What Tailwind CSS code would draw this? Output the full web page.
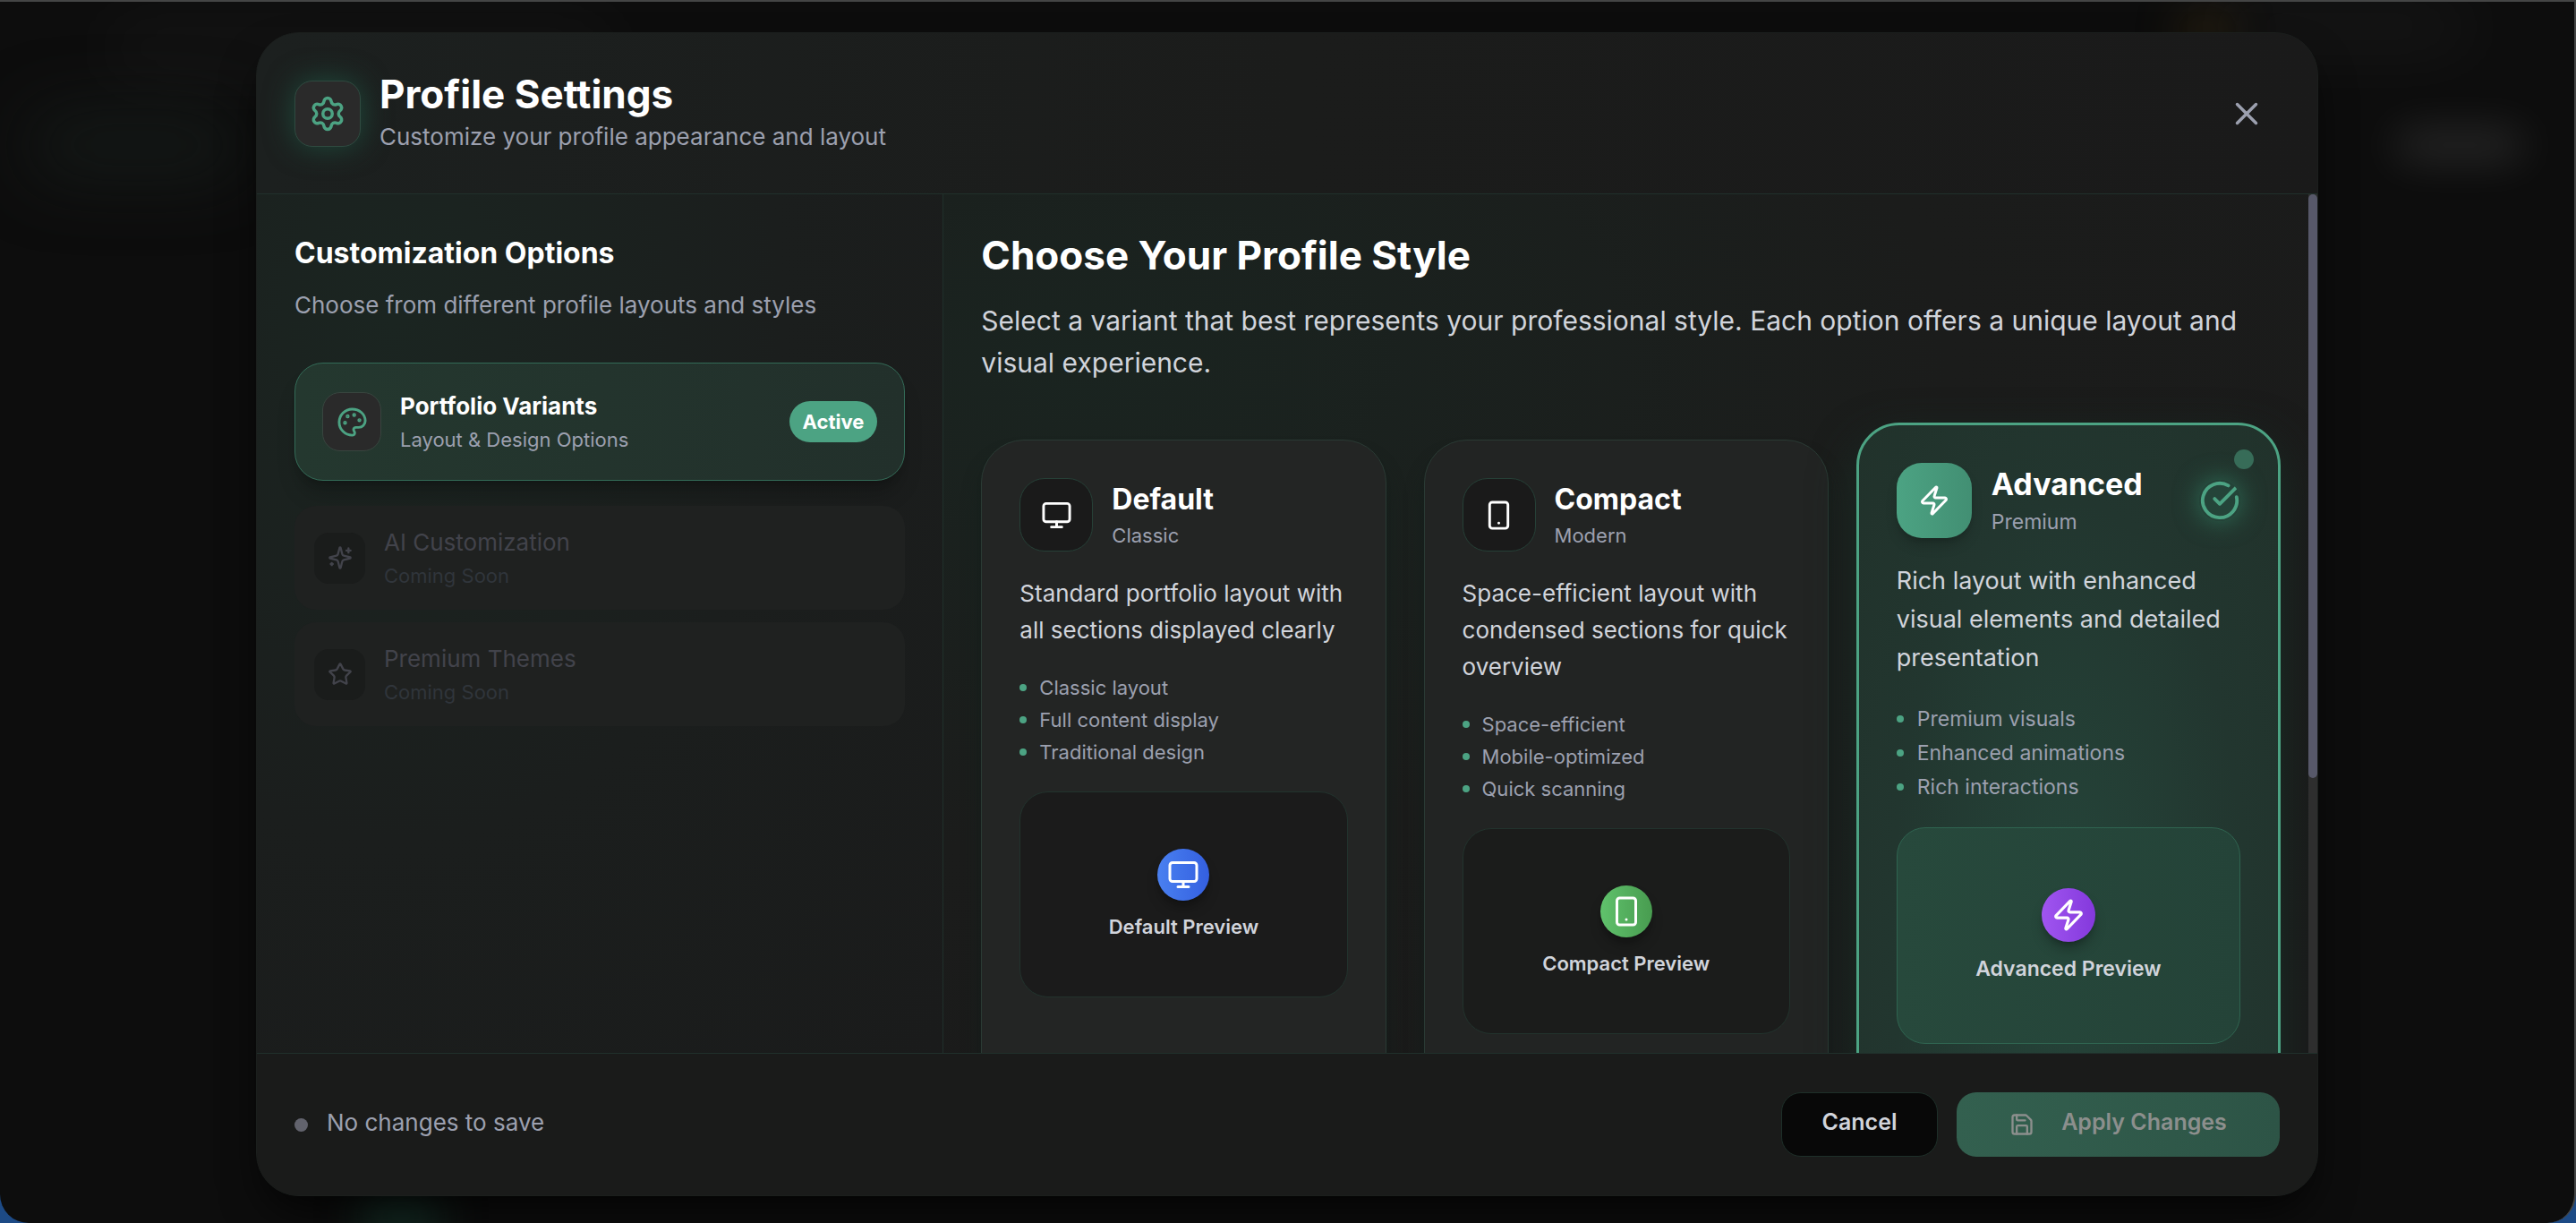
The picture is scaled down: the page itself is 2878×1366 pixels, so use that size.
<!DOCTYPE html>
<html lang="en">
<head>
<meta charset="utf-8">
<meta name="viewport" content="width=device-width, initial-scale=1">
<title>Profile Settings</title>
<script src="https://cdn.jsdelivr.net/npm/@tailwindcss/browser@4"></script>
</head>
<body class="bg-[#1d4a85] font-['Inter',sans-serif] text-white">
<svg class="hidden" aria-hidden="true">
  <defs>
    <symbol id="monitor" viewBox="0 0 24 24"><rect x="2" y="3" width="20" height="14" rx="2"/><path d="M8 21h8M12 17v4"/></symbol>
    <symbol id="phone" viewBox="0 0 24 24"><rect x="5" y="2" width="14" height="20" rx="2"/><path d="M12 18h.01"/></symbol>
    <symbol id="zap" viewBox="0 0 24 24"><path d="M4 14a1 1 0 0 1-.78-1.63l9.9-10.2a.5.5 0 0 1 .86.46l-1.92 6.02A1 1 0 0 0 13 10h7a1 1 0 0 1 .78 1.63l-9.9 10.2a.5.5 0 0 1-.86-.46l1.92-6.02A1 1 0 0 0 11 14z"/></symbol>
  </defs>
</svg>

<div class="relative flex h-screen items-center justify-center overflow-hidden rounded-b-[32px] border-t-2 border-r-2 border-[#444545] bg-[#0d0d0d] pt-1">
  <!-- blurred page behind the dialog -->
  <div class="absolute top-6 left-28 h-14 w-[580px] rounded-full bg-white/4 blur-2xl"></div>
  <div class="absolute top-32 left-8 h-16 w-60 rounded-full bg-[#1a2320]/60 blur-2xl"></div>
  <div class="absolute top-2 right-28 h-10 w-[300px] rounded-full bg-white/6 blur-2xl"></div>
  <div class="absolute top-36 right-14 h-8 w-36 rounded-full bg-white/12 blur-xl"></div>
  <div class="absolute top-5 right-[380px] h-6 w-16 rounded-full bg-[#6b4a10]/40 blur-xl"></div>
  <div class="absolute -bottom-3 left-[400px] h-10 w-24 rounded-full bg-[#1c5543]/60 blur-xl"></div>

  <div role="dialog" aria-labelledby="dialog-title" class="relative flex h-[calc(100vh-66px)] w-full max-w-[2304px] flex-col overflow-hidden rounded-[48px] border border-[#1b1f1d] bg-[#1a1a1a] shadow-2xl shadow-black/80">
    <header class="flex h-[180px] shrink-0 items-center gap-[21px] border-b border-[#20302b] bg-linear-to-r from-[#1c201f] via-[#1b1c1b] to-[#1a1a1a] px-[42px]">
      <div class="flex size-[74px] items-center justify-center rounded-[20px] border border-[#2f4a40] bg-[#2a2a2a] shadow-[0_0_32px_#1f4a3c]">
        <svg class="size-[42px] text-[#4ca383]" viewBox="0 0 24 24" fill="none" stroke="currentColor" stroke-width="2" stroke-linecap="round" stroke-linejoin="round"><path d="M9.671 4.136a2.34 2.34 0 0 1 4.659 0 2.34 2.34 0 0 0 3.319 1.915 2.34 2.34 0 0 1 2.33 4.033 2.34 2.34 0 0 0 0 3.831 2.34 2.34 0 0 1-2.33 4.033 2.34 2.34 0 0 0-3.319 1.915 2.34 2.34 0 0 1-4.659 0 2.34 2.34 0 0 0-3.32-1.915 2.34 2.34 0 0 1-2.33-4.033 2.34 2.34 0 0 0 0-3.831A2.34 2.34 0 0 1 6.35 6.051a2.34 2.34 0 0 0 3.319-1.915"/><circle cx="12" cy="12" r="3"/></svg>
      </div>
      <div class="flex-1 pb-1">
        <h1 id="dialog-title" class="text-[44px] leading-[52px] font-bold">Profile Settings</h1>
        <p class="mt-1 text-[26px] leading-[36px] text-[#9ca0af]">Customize your profile appearance and layout</p>
      </div>
      <button aria-label="Close" class="flex size-[74px] items-center justify-center rounded-[20px] text-[#9ca0af]">
        <svg class="size-[42px]" viewBox="0 0 24 24" fill="none" stroke="currentColor" stroke-width="2" stroke-linecap="round"><path d="M18 6 6 18M6 6l12 12"/></svg>
      </button>
    </header>

    <div class="flex min-h-0 flex-1">
      <aside class="w-1/3 shrink-0 border-r border-[#20302b] bg-[radial-gradient(ellipse_at_20%_15%,#1b2521_0%,#1b1e1d_50%,#1a1b1b_100%)] p-[42px]">
        <h2 class="text-[32px] leading-[48px] font-bold">Customization Options</h2>
        <p class="mt-[14px] text-[26px] leading-[40px] text-[#9ca0af]">Choose from different profile layouts and styles</p>
        <button class="mt-[44px] flex h-[132px] w-full items-center gap-[21px] rounded-[32px] border border-[#336b57] bg-linear-to-r from-[#24382f] to-[#22302b] px-[30px] text-left shadow-xl shadow-black/20">
          <span class="flex size-[66px] items-center justify-center rounded-[20px] border border-[#38453f] bg-[#2a2a2a]">
            <svg class="size-[35px] text-[#4ca383]" viewBox="0 0 24 24" fill="none" stroke="currentColor" stroke-width="2" stroke-linecap="round" stroke-linejoin="round"><path d="M12 22a1 1 0 0 1 0-20 10 9 0 0 1 10 9 5 5 0 0 1-5 5h-2.25a1.75 1.75 0 0 0-1.4 2.8l.3.4a1.75 1.75 0 0 1-1.4 2.8z"/><circle cx="13.5" cy="6.5" r=".5" fill="currentColor"/><circle cx="17.5" cy="10.5" r=".5" fill="currentColor"/><circle cx="6.5" cy="12.5" r=".5" fill="currentColor"/><circle cx="8.5" cy="7.5" r=".5" fill="currentColor"/></svg>
          </span>
          <span class="flex-1">
            <span class="block text-[26px] leading-[36px] font-bold">Portfolio Variants</span>
            <span class="mt-1 block text-[22px] leading-[30px] text-[#9ca0af]">Layout &amp; Design Options</span>
          </span>
          <span class="flex h-[46px] items-center rounded-full bg-[#4ca383] px-[15px] text-[22px] font-bold">Active</span>
        </button>
        <button disabled class="mt-[28px] flex h-[116px] w-full items-center gap-[21px] rounded-[24px] bg-[#1f2120] px-[22px] text-left text-[#42434b]">
          <span class="flex size-[57px] items-center justify-center rounded-[16px] bg-[#1a1c1b]">
            <svg class="size-[28px]" viewBox="0 0 24 24" fill="none" stroke="currentColor" stroke-width="2" stroke-linecap="round" stroke-linejoin="round"><path d="M9.937 15.5A2 2 0 0 0 8.5 14.063l-6.135-1.582a.5.5 0 0 1 0-.962L8.5 9.936A2 2 0 0 0 9.937 8.5l1.582-6.135a.5.5 0 0 1 .963 0L14.063 8.5A2 2 0 0 0 15.5 9.937l6.135 1.581a.5.5 0 0 1 0 .964L15.5 14.063a2 2 0 0 0-1.437 1.437l-1.582 6.135a.5.5 0 0 1-.963 0zM20 3v4M22 5h-4M4 17v2M5 18H3"/></svg>
          </span>
          <span>
            <span class="block text-[26px] leading-[36px]">AI Customization</span>
            <span class="mt-1 block text-[22px] leading-[30px] text-[#30353b]">Coming Soon</span>
          </span>
        </button>
        <button disabled class="mt-[14px] flex h-[116px] w-full items-center gap-[21px] rounded-[24px] bg-[#1f2120] px-[22px] text-left text-[#42434b]">
          <span class="flex size-[57px] items-center justify-center rounded-[16px] bg-[#1a1c1b]">
            <svg class="size-[28px]" viewBox="0 0 24 24" fill="none" stroke="currentColor" stroke-width="2" stroke-linecap="round" stroke-linejoin="round"><path d="M11.525 2.295a.53.53 0 0 1 .95 0l2.31 4.679a2.123 2.123 0 0 0 1.595 1.16l5.166.756a.53.53 0 0 1 .294.904l-3.736 3.638a2.123 2.123 0 0 0-.611 1.878l.882 5.14a.53.53 0 0 1-.771.56l-4.618-2.428a2.122 2.122 0 0 0-1.973 0L6.396 21.01a.53.53 0 0 1-.77-.56l.881-5.139a2.122 2.122 0 0 0-.611-1.879L2.16 9.795a.53.53 0 0 1 .294-.906l5.165-.755a2.122 2.122 0 0 0 1.597-1.16z"/></svg>
          </span>
          <span>
            <span class="block text-[26px] leading-[36px]">Premium Themes</span>
            <span class="mt-1 block text-[22px] leading-[30px] text-[#30353b]">Coming Soon</span>
          </span>
        </button>
      </aside>

      <main class="min-w-0 flex-1 overflow-hidden bg-[radial-gradient(ellipse_at_10%_20%,#1a2420_0%,#1b1c1b_50%,#1a1a1a_100%)] p-[42px]">
        <h2 class="text-[44px] leading-[52px] font-bold">Choose Your Profile Style</h2>
        <p class="mt-[24px] text-[30px] leading-[47px] text-[#d1d4db]">Select a variant that best represents your professional style. Each option offers a unique layout and visual experience.</p>
        <div class="mt-[62px] grid grid-cols-3 gap-[42px]">
          <article class="h-[772px] rounded-[48px] border border-[#2a3a34] bg-[#232524] p-[42px] shadow-xl shadow-[#14201c]">
            <div class="flex items-center gap-[21px]">
              <span class="flex size-[82px] shrink-0 items-center justify-center rounded-[28px] border border-[#264037] bg-[#1a1a1a]"><svg class="size-[35px]" fill="none" stroke="currentColor" stroke-width="2" stroke-linecap="round" stroke-linejoin="round"><use href="#monitor"/></svg></span>
              <div>
                <h3 class="text-[32px] leading-[42px] font-bold">Default</h3>
                <p class="mt-1 text-[22px] leading-[30px] text-[#9ca0af]">Classic</p>
              </div>
            </div>
            <p class="mt-[26px] text-[26px] leading-[41px] text-[#d1d4db]">Standard portfolio layout with all sections displayed clearly</p>
            <ul class="mt-[26px] text-[22px] leading-[36px] text-[#9ca0af]">
              <li class="flex items-center gap-[14px]"><span class="size-[8px] rounded-full bg-[#4ca383]"></span>Classic layout</li>
              <li class="flex items-center gap-[14px]"><span class="size-[8px] rounded-full bg-[#4ca383]"></span>Full content display</li>
              <li class="flex items-center gap-[14px]"><span class="size-[8px] rounded-full bg-[#4ca383]"></span>Traditional design</li>
            </ul>
            <div class="mt-[26px] flex h-[230px] flex-col items-center justify-center gap-[14px] rounded-[32px] border border-[#22332d] bg-[#1b1b1b]">
              <span class="flex size-[58px] items-center justify-center rounded-full bg-linear-to-r from-[#4a80f0] to-[#345fe0] shadow-lg shadow-black/30"><svg class="size-[36px]" fill="none" stroke="currentColor" stroke-width="2" stroke-linecap="round" stroke-linejoin="round"><use href="#monitor"/></svg></span>
              <span class="text-[22px] leading-[30px] font-semibold text-[#d1d4db]">Default Preview</span>
            </div>
          </article>

          <article class="h-[772px] rounded-[48px] border border-[#2a3a34] bg-[#222423] p-[42px] shadow-xl shadow-[#14201c]">
            <div class="flex items-center gap-[21px]">
              <span class="flex size-[82px] shrink-0 items-center justify-center rounded-[28px] border border-[#264037] bg-[#1a1a1a]"><svg class="size-[35px]" fill="none" stroke="currentColor" stroke-width="2" stroke-linecap="round" stroke-linejoin="round"><use href="#phone"/></svg></span>
              <div>
                <h3 class="text-[32px] leading-[42px] font-bold">Compact</h3>
                <p class="mt-1 text-[22px] leading-[30px] text-[#9ca0af]">Modern</p>
              </div>
            </div>
            <p class="mt-[26px] text-[26px] leading-[41px] text-[#d1d4db]">Space-efficient layout with condensed sections for quick overview</p>
            <ul class="mt-[26px] text-[22px] leading-[36px] text-[#9ca0af]">
              <li class="flex items-center gap-[14px]"><span class="size-[8px] rounded-full bg-[#4ca383]"></span>Space-efficient</li>
              <li class="flex items-center gap-[14px]"><span class="size-[8px] rounded-full bg-[#4ca383]"></span>Mobile-optimized</li>
              <li class="flex items-center gap-[14px]"><span class="size-[8px] rounded-full bg-[#4ca383]"></span>Quick scanning</li>
            </ul>
            <div class="mt-[26px] flex h-[230px] flex-col items-center justify-center gap-[14px] rounded-[32px] border border-[#22332d] bg-[#1b1c1b]">
              <span class="flex size-[58px] items-center justify-center rounded-full bg-linear-to-r from-[#60c26c] to-[#489c50] shadow-lg shadow-black/30"><svg class="size-[36px]" fill="none" stroke="currentColor" stroke-width="2" stroke-linecap="round" stroke-linejoin="round"><use href="#phone"/></svg></span>
              <span class="text-[22px] leading-[30px] font-semibold text-[#d1d4db]">Compact Preview</span>
            </div>
          </article>

          <article class="relative -mx-[11px] -mt-[19px] h-[810px] rounded-[48px] border-3 border-[#4ca383] bg-[radial-gradient(ellipse_at_50%_70%,#25453a_0%,#22362f_60%,#21322b_100%)] p-[42px] shadow-[0_20px_50px_#1a2d26]">
            <span class="absolute top-[27px] right-[27px] size-[22px] rounded-full bg-[#376c58]"></span>
            <div class="flex items-center gap-[22px]">
              <span class="flex size-[84px] shrink-0 items-center justify-center rounded-[28px] bg-linear-to-r from-[#4ca383] to-[#428f73] shadow-lg shadow-black/20"><svg class="size-[36px]" fill="none" stroke="currentColor" stroke-width="2" stroke-linecap="round" stroke-linejoin="round"><use href="#zap"/></svg></span>
              <div class="flex-1">
                <h3 class="text-[34px] leading-[44px] font-bold">Advanced</h3>
                <p class="mt-1 text-[23px] leading-[32px] text-[#9ca0af]">Premium</p>
              </div>
              <svg class="size-[46px] rounded-full bg-[#2b5c4a]/40 text-[#4ca383] shadow-[0_0_28px_#2f7059]" viewBox="0 0 24 24" fill="none" stroke="currentColor" stroke-width="2" stroke-linecap="round" stroke-linejoin="round"><path d="M21.801 10A10 10 0 1 1 17 3.335"/><path d="m9 11 3 3L22 4"/></svg>
            </div>
            <p class="mt-[26px] text-[27px] leading-[43px] text-[#d1d4db]">Rich layout with enhanced visual elements and detailed presentation</p>
            <ul class="mt-[28px] text-[23px] leading-[38px] text-[#9ca0af]">
              <li class="flex items-center gap-[15px]"><span class="size-[8px] rounded-full bg-[#4ca383]"></span>Premium visuals</li>
              <li class="flex items-center gap-[15px]"><span class="size-[8px] rounded-full bg-[#4ca383]"></span>Enhanced animations</li>
              <li class="flex items-center gap-[15px]"><span class="size-[8px] rounded-full bg-[#4ca383]"></span>Rich interactions</li>
            </ul>
            <div class="mt-[26px] flex h-[242px] flex-col items-center justify-center gap-[14px] rounded-[32px] border border-[#2f6450] bg-linear-to-r from-[#27493c] to-[#244338]">
              <span class="flex size-[60px] items-center justify-center rounded-full bg-linear-to-r from-[#a055f0] to-[#8438dc] shadow-lg shadow-black/30"><svg class="size-[38px]" fill="none" stroke="currentColor" stroke-width="2" stroke-linecap="round" stroke-linejoin="round"><use href="#zap"/></svg></span>
              <span class="text-[23px] leading-[32px] font-semibold text-[#d1d4db]">Advanced Preview</span>
            </div>
          </article>
        </div>
      </main>
      <div class="w-[10px] shrink-0 bg-[#2e2e2e]" aria-hidden="true"><div class="h-[68%] rounded-full bg-[#575869]"></div></div>
    </div>

    <footer class="flex h-[159px] shrink-0 items-center gap-[21px] border-t border-[#20302b] bg-[#1a1b1a] px-[42px]">
      <span class="size-[15px] rounded-full bg-[#62636d]"></span>
      <p class="flex-1 pb-1 text-[26px] leading-[36px] text-[#9ca0af]">No changes to save</p>
      <button class="h-[72px] w-[175px] rounded-[22px] border border-[#1e2f29] bg-[#080808] pb-1 text-[25px] font-semibold text-[#d1d4db]">Cancel</button>
      <button disabled class="flex h-[72px] w-[361px] items-center justify-center gap-[30px] rounded-[22px] bg-linear-to-r from-[#33604f] to-[#2d5446] text-[25px] font-semibold text-[#8c8f8d]">
        <svg class="size-[28px]" viewBox="0 0 24 24" fill="none" stroke="currentColor" stroke-width="2" stroke-linecap="round" stroke-linejoin="round"><path d="M15.2 3a2 2 0 0 1 1.4.6l3.8 3.8a2 2 0 0 1 .6 1.4V19a2 2 0 0 1-2 2H5a2 2 0 0 1-2-2V5a2 2 0 0 1 2-2z"/><path d="M17 21v-7a1 1 0 0 0-1-1H8a1 1 0 0 0-1 1v7M7 3v4a1 1 0 0 0 1 1h7"/></svg>
        <span class="pb-1">Apply Changes</span>
      </button>
    </footer>
  </div>
</div>
</body>
</html>
